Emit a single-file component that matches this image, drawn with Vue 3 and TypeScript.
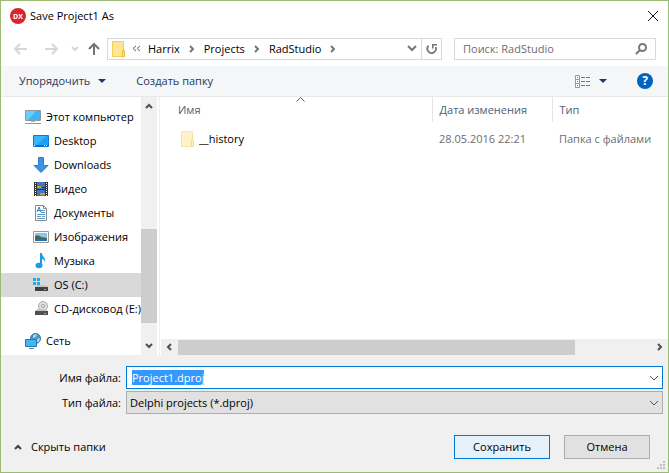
<script setup lang="ts">
import { onMounted, ref } from 'vue'

interface Place {
  id: string
  name: string
  root?: boolean
}

const places: Place[] = [
  { id: 'computer', name: 'Этот компьютер', root: true },
  { id: 'desktop', name: 'Desktop' },
  { id: 'downloads', name: 'Downloads' },
  { id: 'video', name: 'Видео' },
  { id: 'documents', name: 'Документы' },
  { id: 'pictures', name: 'Изображения' },
  { id: 'music', name: 'Музыка' },
  { id: 'drive', name: 'OS (C:)' },
  { id: 'cd', name: 'CD-дисковод (E:)' },
  { id: 'network', name: 'Сеть', root: true },
]
const crumbs: string[] = ['Harrix', 'Projects', 'RadStudio']

const selected = ref('drive')
const fileName = ref('Project1.dproj')
const search = ref('')
const nameField = ref<HTMLInputElement | null>(null)

onMounted(() => {
  nameField.value?.focus()
  nameField.value?.select()
})
</script>

<template>
  <main class="dialog">
    <header class="title-bar">
      <svg class="logo" width="16" height="16" viewBox="0 0 16 16" aria-hidden="true">
        <circle cx="8" cy="8" r="8" fill="#dc2430" />
        <text x="8" y="11" text-anchor="middle" font-size="7" font-weight="bold" fill="#fff">DX</text>
      </svg>
      <h1>Save Project1 As</h1>
      <button class="close" type="button" aria-label="Закрыть">
        <svg width="12" height="12" viewBox="0 0 12 12"><path d="M1 1L11 11M11 1L1 11" stroke="#111" fill="none" /></svg>
      </button>
    </header>

    <nav class="nav-bar">
      <div class="history">
        <button type="button" aria-label="Назад">
          <svg width="14" height="12" viewBox="0 0 14 12"><path d="M13 6H2M6 1L1 6L6 11" stroke="#d6d6d6" stroke-width="2" fill="none" /></svg>
        </button>
        <button type="button" aria-label="Вперёд">
          <svg width="14" height="12" viewBox="0 0 14 12"><path d="M1 6H12M8 1L13 6L8 11" stroke="#d6d6d6" stroke-width="2" fill="none" /></svg>
        </button>
        <button type="button" aria-label="Последние расположения">
          <svg width="8" height="6" viewBox="0 0 8 6"><path d="M1 1L4 4L7 1" stroke="#d6d6d6" stroke-width="2" fill="none" /></svg>
        </button>
        <button type="button" aria-label="Вверх">
          <svg width="12" height="13" viewBox="0 0 12 13"><path d="M6 13V2M1 7L6 2L11 7" stroke="#747474" stroke-width="2" fill="none" /></svg>
        </button>
      </div>
      <div class="address">
        <svg class="folder" width="14" height="16" viewBox="0 0 14 16" aria-hidden="true">
          <path d="M0.5 0.5H11.5V15.5H0.5Z" fill="#ffe693" stroke="#f0ce62" />
          <path d="M10.5 9.5H12.5V15.5H10.5Z" fill="#ffe48c" stroke="#e8bd3c" />
        </svg>
        <svg class="more" width="8" height="7" viewBox="0 0 8 7" aria-hidden="true"><path d="M4 1L1 3.5L4 6M8 1L5 3.5L8 6" stroke="#666" fill="none" /></svg>
        <template v-for="crumb in crumbs" :key="crumb">
          <a href="#" class="crumb">{{ crumb }}</a>
          <svg class="sep" width="5" height="8" viewBox="0 0 5 8" aria-hidden="true"><path d="M1 1L4 4L1 7" stroke="#777" stroke-width="2" fill="none" /></svg>
        </template>
        <button class="drop" type="button" aria-label="Предыдущие расположения">
          <svg width="10" height="7" viewBox="0 0 10 7"><path d="M1 1L5 5L9 1" stroke="#777" stroke-width="2" fill="none" /></svg>
        </button>
        <button class="refresh" type="button" aria-label="Обновить">
          <svg width="12" height="12" viewBox="0 0 12 12"><path d="M2.600 2.600A4.300 4.300 0 1 0 9.600 4" stroke="#777" stroke-width="1.800" fill="none" /><path d="M6 1H11V2.600H7.600V5.600H6Z" fill="#777" /></svg>
        </button>
      </div>
      <label class="search">
        <input v-model="search" type="text" aria-label="Поиск" placeholder="Поиск: RadStudio" />
        <svg width="12" height="12" viewBox="0 0 12 12" aria-hidden="true"><circle cx="7.5" cy="4.5" r="3.5" stroke="#777" stroke-width="2" fill="none" /><path d="M5 7L1 11" stroke="#777" stroke-width="2" /></svg>
      </label>
    </nav>

    <div class="tool-bar">
      <button type="button">Упорядочить
        <svg width="8" height="4" viewBox="0 0 8 4" aria-hidden="true"><path d="M0 0H8L4 4Z" fill="#1e3a63" /></svg>
      </button>
      <button type="button">Создать папку</button>
      <button class="view" type="button" aria-label="Изменить представление">
        <svg width="16" height="13" viewBox="0 0 16 13">
          <path d="M0.5 0.5H4.5V12.5H0.5ZM0.5 4.5H4.5M0.5 8.5H4.5" fill="#fff" stroke="#999" />
          <path d="M2 2h1v1h-1z" fill="#2a9050" /><path d="M2 6h1v1h-1z" fill="#1c82f0" /><path d="M2 10h1v1h-1z" fill="#e02020" />
          <path d="M6 2.5H16M6 6.5H16M6 10.5H16" stroke="#777" stroke-dasharray="4 1" />
        </svg>
        <svg width="8" height="4" viewBox="0 0 8 4"><path d="M0 0H8L4 4Z" fill="#1e3a63" /></svg>
      </button>
      <button class="help" type="button" aria-label="Справка">?</button>
    </div>

    <section class="body">
      <aside class="places">
        <ul>
          <li v-for="place in places" :key="place.id" :class="{ root: place.root }">
            <button type="button" :class="{ current: selected === place.id }" @click="selected = place.id">
              <svg width="16" height="16" viewBox="0 0 16 16" aria-hidden="true">
                <g v-if="place.id === 'computer'">
                  <path d="M0.5 1.5H15.5V11.5H0.5Z" fill="#3fb4f5" stroke="#8a9ba8" /><path d="M1 2H11L3 11H1Z" fill="#6accfb" />
                  <path d="M6 12H10V13H6Z" fill="#9db7c6" /><path d="M0 14H16V15H0Z" fill="#6fa0bd" />
                </g>
                <g v-else-if="place.id === 'desktop'">
                  <path d="M0.5 2.5H15.5V13.5H0.5Z" fill="#1ba1f5" stroke="#1478c8" /><path d="M1 3H13L4 12H1Z" fill="#3cb4fc" />
                  <path d="M1 12H15V13H1Z" fill="#1369ae" /><path d="M1 12H2V13H1ZM11 12H12V13H11ZM13 12H14V13H13Z" fill="#fff" />
                </g>
                <path v-else-if="place.id === 'downloads'" d="M5.5 0.5H10.5V8.5H15L8 15.5L1 8.5H5.5Z" fill="#3c93e4" stroke="#2c7fce" />
                <g v-else-if="place.id === 'video'">
                  <path d="M1 1H15V15H1Z" fill="#333" /><path d="M4 1H12V15H4Z" fill="#3d78c2" />
                  <path d="M2.5 2V15M13.5 2V15" stroke="#fff" stroke-dasharray="1 1" />
                  <path d="M4 5H8V7H4ZM7 12H12V14H7Z" fill="#d39b36" /><path d="M8 3H11V5H8ZM5 10H8V11H5Z" fill="#c8473a" /><path d="M9 6H12V7H9ZM4 8H12V9H4Z" fill="#1e3153" />
                </g>
                <g v-else-if="place.id === 'documents'">
                  <path d="M2.5 0.5H10.5L13.5 3.5V15.5H2.5Z" fill="#fff" stroke="#888" /><path d="M10.5 0.5V3.5H13.5" fill="none" stroke="#888" />
                  <path d="M8 5.5H12M8 7.5H12M4 9.5H12M4 11.5H8M9 11.5H12M4 13.5H12" stroke="#5d9ac9" /><path d="M4 7L6 2L8 7M5 5.5H7" fill="none" stroke="#2484ce" />
                </g>
                <g v-else-if="place.id === 'pictures'">
                  <path d="M0.5 2.5H15.5V13.5H0.5Z" fill="#fff" stroke="#999" /><path d="M2 4H14V12H2Z" fill="#8fc5ed" />
                  <path d="M2 7Q5 5 8 8L14 9V12H2Z" fill="#43675b" /><path d="M2 10H14V12H2Z" fill="#2d6fab" />
                </g>
                <g v-else-if="place.id === 'music'">
                  <path d="M7 0H9C9 4 13 4 12 10C12 7 10 6 9 6V12H7Z" fill="#1a9be8" /><ellipse cx="6" cy="12.5" rx="3.5" ry="2.8" fill="#1a9be8" />
                </g>
                <g v-else-if="place.id === 'drive'">
                  <path d="M0 1H3V4H0ZM4 1H7V4H4ZM0 5H3V8H0ZM4 5H7V8H4Z" fill="#18aef0" />
                  <path d="M4 8H13L15 10H2Z" fill="#c5c5c5" /><path d="M2 10H15V14H2Z" fill="#414141" /><path d="M11 12H13V13H11Z" fill="#3be34d" />
                </g>
                <g v-else-if="place.id === 'cd'">
                  <circle cx="10" cy="5" r="4.5" fill="#e0e0e0" stroke="#aaa" /><circle cx="10" cy="5" r="1.5" fill="#fff" stroke="#999" />
                  <path d="M4 8H13L15 10H2Z" fill="#c5c5c5" /><path d="M2 10H15V14H2Z" fill="#505050" /><path d="M11 12H13V13H11Z" fill="#3be34d" />
                </g>
                <g v-else>
                  <circle cx="10.5" cy="5.5" r="5" fill="#4e96c8" stroke="#356f9d" /><path d="M8 2L12 1L11 4L8 5ZM12 6L15 5L14 9H12Z" fill="#a9d5ee" />
                  <path d="M0.5 6.5H11.5V13.5H0.5Z" fill="#45b5f3" stroke="#2878ad" /><path d="M4 15H9V16H4Z" fill="#62889e" />
                </g>
              </svg>
              <span>{{ place.name }}</span>
            </button>
          </li>
        </ul>
        <div class="v-scroll">
          <svg width="8" height="6" viewBox="0 0 8 6" aria-hidden="true"><path d="M1 5L4 2L7 5" stroke="#505050" stroke-width="2" fill="none" /></svg>
          <div class="v-track"><div class="v-thumb"></div></div>
          <svg width="8" height="6" viewBox="0 0 8 6" aria-hidden="true"><path d="M1 1L4 4L7 1" stroke="#505050" stroke-width="2" fill="none" /></svg>
        </div>
      </aside>

      <div class="files">
        <table>
          <colgroup><col /><col class="c-date" /><col class="c-type" /></colgroup>
          <thead>
            <tr>
              <th scope="col">
                Имя
                <svg class="sort" width="9" height="5" viewBox="0 0 9 5" aria-hidden="true"><path d="M0.5 4.5L4.5 0.5L8.5 4.5" stroke="#555" fill="none" /></svg>
              </th>
              <th scope="col">Дата изменения</th>
              <th scope="col">Тип</th>
            </tr>
          </thead>
          <tbody>
            <tr>
              <td class="name">
                <svg width="14" height="16" viewBox="0 0 14 16" aria-hidden="true">
                  <path d="M0.5 0.5H11.5V15.5H0.5Z" fill="#fff2c9" stroke="#f7e5ae" />
                  <path d="M10.5 9.5H12.5V15.5H10.5Z" fill="#fff2c9" stroke="#f3dc9a" />
                </svg>
                <span>__history</span>
              </td>
              <td>28.05.2016 22:21</td>
              <td>Папка с файлами</td>
            </tr>
          </tbody>
        </table>
        <div class="h-scroll">
          <svg width="6" height="8" viewBox="0 0 6 8" aria-hidden="true"><path d="M5 1L2 4L5 7" stroke="#505050" stroke-width="2" fill="none" /></svg>
          <div class="h-track"><div class="h-thumb"></div></div>
          <svg width="6" height="8" viewBox="0 0 6 8" aria-hidden="true"><path d="M1 1L4 4L1 7" stroke="#505050" stroke-width="2" fill="none" /></svg>
        </div>
      </div>
    </section>

    <footer class="bottom">
      <div class="fields">
        <label for="file-name">Имя файла:</label>
        <div class="combo editable">
          <input id="file-name" ref="nameField" v-model="fileName" type="text" spellcheck="false" />
          <svg width="10" height="6" viewBox="0 0 10 6" aria-hidden="true"><path d="M1 1L5 5L9 1" stroke="#555" fill="none" /></svg>
        </div>
        <label for="file-type">Тип файла:</label>
        <div class="combo">
          <select id="file-type"><option>Delphi projects (*.dproj)</option></select>
          <svg width="10" height="6" viewBox="0 0 10 6" aria-hidden="true"><path d="M1 1L5 5L9 1" stroke="#555" fill="none" /></svg>
        </div>
      </div>
      <div class="actions">
        <button class="hide" type="button">
          <svg width="8" height="6" viewBox="0 0 8 6" aria-hidden="true"><path d="M1 5L4 2L7 5" stroke="#404040" stroke-width="2" fill="none" /></svg>
          Скрыть папки
        </button>
        <button class="push primary" type="button">Сохранить</button>
        <button class="push" type="button">Отмена</button>
      </div>
      <svg class="grip" width="8" height="8" viewBox="0 0 8 8" aria-hidden="true"><path d="M6 0h2v2h-2zM3 3h2v2h-2zM6 3h2v2h-2zM0 6h2v2h-2zM3 6h2v2h-2zM6 6h2v2h-2z" fill="#bfbfbf" /></svg>
    </footer>
  </main>
</template>

<style>
body { margin: 0; }
</style>

<style scoped>
.dialog {
  box-sizing: border-box;
  min-height: 100vh;
  display: flex;
  flex-direction: column;
  border: 1px solid #9bbb73;
  background: #fff;
  color: #000;
  font: 11px/16px "Open Sans", "Noto Sans", sans-serif;
}
.dialog *, .dialog *::before { box-sizing: border-box; }
svg { display: block; flex: none; }
button, input, select { font: inherit; color: inherit; margin: 0; padding: 0; border: 0; background: none; }
button { display: flex; align-items: center; white-space: nowrap; }
button:focus, input:focus, select:focus { outline: none; }

.title-bar { display: flex; align-items: center; height: 30px; padding: 0 9px; }
.title-bar h1 { flex: 1; margin: 0 0 0 4px; font-size: 11px; font-weight: 400; }

.nav-bar { display: flex; align-items: center; height: 35px; padding: 0 12px 0 13px; }
.history { display: flex; align-items: center; width: 93px; }
.history button + button { margin-left: 16px; }
.history button:nth-child(3) { margin-left: 13px; }
.history button:nth-child(4) { margin-left: 9px; }
.address { display: flex; align-items: center; flex: 1; height: 22px; border: 1px solid #d9d9d9; padding-left: 4px; }
.more { margin: 0 8px 0 6px; }
.crumb { color: inherit; text-decoration: none; }
.sep { margin: 0 10px 0 9px; }
.drop { margin-left: auto; }
.refresh { justify-content: center; align-self: stretch; width: 20px; margin-left: 4px; border-left: 1px solid #d9d9d9; }
.search { display: flex; align-items: center; width: 202px; height: 22px; margin-left: 12px; padding: 0 8px; border: 1px solid #d9d9d9; }
.search input { flex: 1; min-width: 0; }
.search input::placeholder { color: #6d6d6d; opacity: 1; }

.tool-bar { display: flex; align-items: center; height: 31px; padding: 0 15px 0 18px; background: #f5f6f7; border-bottom: 1px solid #e8e8e9; color: #1e395b; }
.tool-bar button + button { margin-left: 30px; }
.tool-bar button svg + svg, .tool-bar button:first-child svg { margin-left: 8px; }
.tool-bar .view { margin-left: auto; }
.tool-bar .help { justify-content: center; width: 16px; height: 16px; border-radius: 50%; background: #0063c0; color: #fff; font-size: 12px; font-weight: 700; }

.body { display: flex; flex: 1; }
.places { display: flex; width: 159px; border-right: 1px solid #f0f0f0; padding-right: 2px; }
.places ul { flex: 1; min-width: 0; margin: 0; padding: 8px 0 0; list-style: none; }
.places li + .root { margin-top: 8px; }
.places button { width: 100%; height: 24px; padding-left: 32px; overflow: hidden; }
.places .root button { padding-left: 24px; }
.places span { margin-left: 5px; }
.places .current { background: #d9d9d9; }
.v-scroll { display: flex; flex-direction: column; align-items: center; width: 16px; padding: 6px 0; background: #f0f0f0; }
.v-track { display: flex; align-items: flex-end; flex: 1; width: 100%; padding-bottom: 20px; }
.v-thumb { width: 100%; height: 44%; background: #cdcdcd; }

.files { display: flex; flex-direction: column; justify-content: space-between; flex: 1; min-width: 0; padding-left: 1px; }
table { width: 100%; border-collapse: collapse; table-layout: fixed; }
.c-date { width: 120px; }
.c-type { width: 116px; }
th { position: relative; height: 25px; padding: 0 7px; border-right: 1px solid #e5e5e5; color: #4c607a; font-weight: 400; text-align: left; white-space: nowrap; }
th:first-child { padding-left: 17px; }
th:last-child { border: 0; }
.sort { position: absolute; top: 0; left: 50%; }
td { height: 34px; padding: 0 7px; color: #6d6d6d; white-space: nowrap; }
.name { display: flex; align-items: center; gap: 4px; padding-left: 20px; color: #000; }
.h-scroll { display: flex; align-items: center; height: 16px; padding: 0 5px; background: #f0f0f0; }
.h-track { flex: 1; padding: 0 6px; }
.h-thumb { width: 84%; height: 15px; background: #cdcdcd; }

.bottom { position: relative; padding: 11px 5px 13px 12px; background: #f0f0f0; }
.fields { display: grid; grid-template-columns: 108px 1fr; gap: 2px 5px; align-items: center; }
.fields label { text-align: right; }
.combo { position: relative; display: flex; align-items: center; height: 23px; border: 1px solid #adadad; background: #e1e1e1; }
.combo svg { position: absolute; right: 3px; pointer-events: none; }
.combo input, .combo select { width: 100%; height: 100%; appearance: none; padding: 0 18px 0 3px; }
.combo.editable { border-color: #0078d7; background: #fff; }
.combo.editable input { padding-left: 5px; }
.combo input::selection { background: #3399ff; color: #fff; }
.actions { display: flex; align-items: center; gap: 14px; margin: 21px 13px 0 1px; }
.hide { gap: 9px; margin-right: auto; }
.push { justify-content: center; width: 86px; height: 24px; border: 1px solid #adadad; background: #e1e1e1; }
.primary { width: 96px; border-color: #0078d7; background: #e5f1fb; }
.grip { position: absolute; right: 3px; bottom: 3px; }
</style>
